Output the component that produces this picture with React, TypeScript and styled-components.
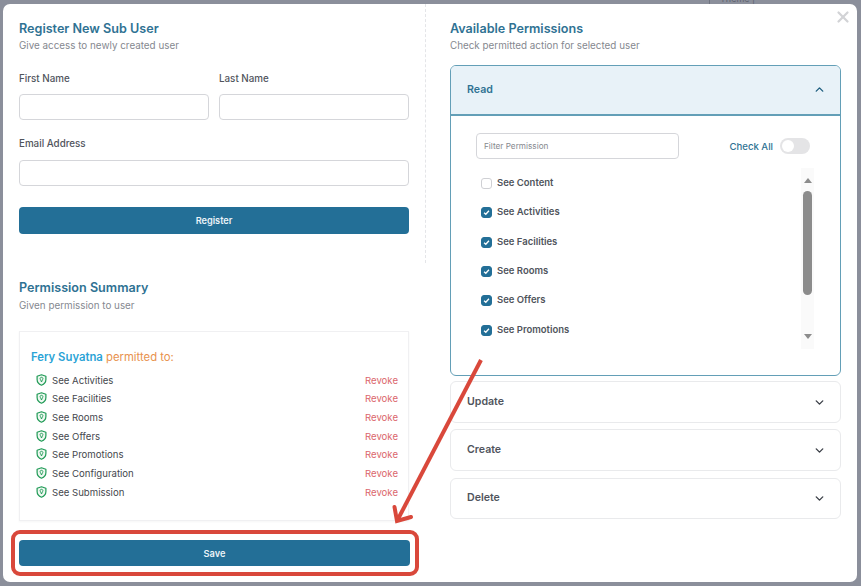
import React from 'react';
import styled, { createGlobalStyle } from 'styled-components';
import { ChevronDown, ChevronUp, X } from 'lucide-react';

const GlobalStyle = createGlobalStyle`
  html, body { margin: 0; padding: 0; }
  body { font-family: "Inter", "Noto Sans", sans-serif; background: #8b8f9b; }
  * { box-sizing: border-box; }
`;

const TEAL = '#236f97';
const HEAD = '#2f7293';

const Backdrop = styled.div`
  position: relative;
  width: 861px;
  height: 586px;
  overflow: hidden;
  padding: 4px 4px 4px 3px;
  background: #8b8f9b;
`;

// bit of the page behind the dialog, only its lower edge shows
const BehindTab = styled.div`
  position: absolute;
  top: -7px;
  left: 709px;
  width: 52px;
  height: 11px;
  border-left: 1px solid #6f7380;
  font-size: 9px;
  line-height: 11px;
  padding-left: 10px;
  color: #5f636f;
`;

const Modal = styled.div`
  position: relative;
  display: flex;
  width: 854px;
  height: 578px;
  background: #fff;
  border-radius: 7px;
`;

const CloseButton = styled.div`
  position: absolute;
  top: 4px;
  right: 5px;
  color: #d2d3d6;
  display: flex;
`;

const LeftColumn = styled.div`
  width: 423px;
`;

const RegisterSection = styled.section`
  height: 259px;
  padding: 16px 16px 0 16px;
  border-right: 1px dashed #e4e5e8;
`;

const SummarySection = styled.section`
  padding: 16px 0 0 16px;
  width: 407px;
`;

const RightColumn = styled.section`
  width: 391px;
  margin-left: 24px;
  padding-top: 16px;
`;

const Title = styled.h2`
  margin: 0;
  font-size: 12.6px;
  line-height: 18px;
  font-weight: 600;
  color: ${HEAD};
`;

const Subtitle = styled.p`
  margin: 0;
  font-size: 9.85px;
  line-height: 14px;
  color: #85888f;
`;

const SummarySubtitle = styled(Subtitle)`
  margin-top: 1px;
`;

const Label = styled.label`
  display: block;
  height: 14px;
  margin-bottom: 9px;
  font-size: 9.8px;
  line-height: 14px;
  font-weight: 500;
  color: #50545c;
`;

const FieldRow = styled.div`
  display: flex;
  gap: 10px;
  margin-top: 20px;

  ${Label} {
    margin-bottom: 8px;
  }
`;

const Field = styled.div`
  flex: 1;
`;

const EmailField = styled(Field)`
  margin-top: 17px;
`;

const TextInput = styled.input`
  display: block;
  width: 100%;
  height: 26px;
  border: 1px solid #d5d6da;
  border-radius: 4px;
  background: #fff;
  font: inherit;
  outline: none;
`;

const PrimaryButton = styled.button`
  display: block;
  width: 100%;
  height: 27px;
  border: none;
  border-radius: 4px;
  background: ${TEAL};
  color: #eaf3f8;
  font: 600 9.2px "Inter", sans-serif;
`;

const RegisterButton = styled(PrimaryButton)`
  margin-top: 21px;
`;

const SummaryCard = styled.div`
  width: 390px;
  height: 190px;
  margin-top: 19px;
  padding: 16px 10px 0 11px;
  border: 1px solid #f0f0f2;
  box-shadow: 0 1px 2px rgba(0, 0, 0, 0.04);
`;

const CardHeading = styled.div`
  height: 18px;
  margin-bottom: 5px;
  font-size: 11.3px;
  line-height: 18px;
  color: #e8924e;
`;

const UserName = styled.span`
  font-weight: 600;
  color: #2ba3d6;
`;

const SummaryRow = styled.div`
  display: flex;
  align-items: center;
  height: 18.67px;
  padding-left: 5px;
  font-size: 9.6px;
  color: #44474d;
`;

const ShieldSvg = styled.svg`
  flex: none;
  margin-right: 5px;
  margin-top: -1px;
`;

const RevokeLink = styled.span`
  margin-left: auto;
  color: #db676c;
`;

const SaveWrap = styled.div`
  position: relative;
  margin-top: 19px;
`;

const SaveButton = styled(PrimaryButton)`
  height: 26px;
`;

const Highlight = styled.div`
  position: absolute;
  inset: -10px -9px -10px -8px;
  border: 4px solid #d9483b;
  border-radius: 9px;
  pointer-events: none;
`;

const Accordion = styled.div`
  margin-top: 13px;
  display: flex;
  flex-direction: column;
  gap: 6px;
`;

const OpenPanel = styled.div`
  height: 311px;
  margin-bottom: -1px;
  border: 1px solid #639fb7;
  border-radius: 6px;
  overflow: hidden;
`;

const OpenHeader = styled.div`
  display: flex;
  align-items: center;
  justify-content: space-between;
  height: 50px;
  padding: 0 14px 2px 16px;
  background: #e8f2f8;
  border-bottom: 2px solid #639fb7;
  font-size: 10.6px;
  font-weight: 600;
  color: ${HEAD};
`;

const ClosedPanel = styled.div`
  display: flex;
  align-items: center;
  justify-content: space-between;
  height: 42px;
  padding: 0 14px 0 16px;
  border: 1px solid #e9eaec;
  border-radius: 6px;
  font-size: 10.6px;
  font-weight: 600;
  color: #50545c;

  &:last-child {
    height: 41px;
    margin-top: 1px;
  }
`;

const PanelLabel = styled.span`
  margin-top: -2px;
`;

const PanelBody = styled.div`
  padding: 17px 30px 0 25px;
`;

const Toolbar = styled.div`
  display: flex;
  align-items: center;
  justify-content: space-between;
`;

const FilterInput = styled.input`
  width: 203px;
  height: 26px;
  padding: 0 7px;
  border: 1px solid #d5d6da;
  border-radius: 4px;
  font: 8.2px "Inter", sans-serif;
  outline: none;
  &::placeholder { color: #85888e; opacity: 1; }
`;

const CheckAll = styled.div`
  display: flex;
  align-items: center;
  gap: 7px;
  font-size: 9.6px;
  font-weight: 500;
  color: ${HEAD};
`;

const Toggle = styled.div`
  width: 30px;
  height: 16px;
  padding: 2px;
  border-radius: 8px;
  background: #e4e4e6;
`;

const ToggleKnob = styled.div`
  width: 12px;
  height: 12px;
  border-radius: 50%;
  background: #fff;
`;

const ListArea = styled.div`
  display: flex;
  justify-content: space-between;
  height: 181px;
  margin-top: 9px;
  margin-right: -4px;
`;

const PermissionList = styled.div`
  padding: 0 0 0 5px;
`;

const PermissionItem = styled.div`
  display: flex;
  align-items: center;
  gap: 5px;
  height: 29.3px;
  font-size: 9.5px;
  font-weight: 600;
  color: #50545c;
`;

const Checkbox = styled.span<{ $checked?: boolean }>`
  display: flex;
  align-items: center;
  justify-content: center;
  width: 11px;
  height: 11px;
  margin-top: ${p => (p.$checked ? '2px' : '1px')};
  border-radius: 3px;
  color: #fff;
  background: ${p => (p.$checked ? TEAL : '#fff')};
  border: 1px solid ${p => (p.$checked ? TEAL : '#cfd0d4')};
`;

const ScrollTrack = styled.div`
  display: flex;
  flex-direction: column;
  align-items: center;
  width: 13px;
  padding: 10px 0 10px;
  background: #fafafa;
`;

const ArrowUp = styled.div`
  width: 0;
  height: 0;
  border-left: 4.5px solid transparent;
  border-right: 4.5px solid transparent;
  border-bottom: 5px solid #8c8c8c;
`;

const ArrowDown = styled.div`
  width: 0;
  height: 0;
  margin-top: auto;
  border-left: 4.5px solid transparent;
  border-right: 4.5px solid transparent;
  border-top: 5px solid #8c8c8c;
`;

const ScrollThumb = styled.div`
  width: 9px;
  height: 104px;
  margin-top: 8px;
  border-radius: 5px;
  background: #8c8c8c;
`;

const ArrowOverlay = styled.svg`
  position: absolute;
  left: 0;
  top: 0;
  pointer-events: none;
`;

const ShieldIcon = () => (
  <ShieldSvg width="11" height="12" viewBox="0 0 11 12">
    <path
      d="M5.5 0.8 L9.9 2.2 V5.6 C9.9 8.4 8 10.3 5.5 11.2 C3 10.3 1.1 8.4 1.1 5.6 V2.2 Z"
      fill="#eef8f1"
      stroke="#1f9a55"
      strokeWidth="1.2"
      strokeLinejoin="round"
    />
    <path
      d="M5.5 3.3 A1.4 1.4 0 0 1 6.4 5.8 L5.5 8 L4.6 5.8 A1.4 1.4 0 0 1 5.5 3.3 Z"
      fill="none"
      stroke="#1f9a55"
      strokeWidth="0.9"
    />
  </ShieldSvg>
);

const summary = [
  'See Activities',
  'See Facilities',
  'See Rooms',
  'See Offers',
  'See Promotions',
  'See Configuration',
  'See Submission',
];

const permissions = [
  { name: 'See Content', checked: false },
  { name: 'See Activities', checked: true },
  { name: 'See Facilities', checked: true },
  { name: 'See Rooms', checked: true },
  { name: 'See Offers', checked: true },
  { name: 'See Promotions', checked: true },
];

export default function App() {
  return (
    <Backdrop>
      <GlobalStyle />
      <BehindTab>Theme |</BehindTab>
      <Modal>
        <CloseButton>
          <X size={18} strokeWidth={3} />
        </CloseButton>
        <LeftColumn>
          <RegisterSection>
            <Title>Register New Sub User</Title>
            <Subtitle>Give access to newly created user</Subtitle>
            <FieldRow>
              <Field>
                <Label>First Name</Label>
                <TextInput />
              </Field>
              <Field>
                <Label>Last Name</Label>
                <TextInput />
              </Field>
            </FieldRow>
            <EmailField>
              <Label>Email Address</Label>
              <TextInput />
            </EmailField>
            <RegisterButton>Register</RegisterButton>
          </RegisterSection>
          <SummarySection>
            <Title>Permission Summary</Title>
            <SummarySubtitle>Given permission to user</SummarySubtitle>
            <SummaryCard>
              <CardHeading>
                <UserName>Fery Suyatna</UserName> permitted to:
              </CardHeading>
              {summary.map(item => (
                <SummaryRow key={item}>
                  <ShieldIcon />
                  {item}
                  <RevokeLink>Revoke</RevokeLink>
                </SummaryRow>
              ))}
            </SummaryCard>
            <SaveWrap>
              <SaveButton>Save</SaveButton>
              <Highlight />
            </SaveWrap>
          </SummarySection>
        </LeftColumn>
        <RightColumn>
          <Title>Available Permissions</Title>
          <Subtitle>Check permitted action for selected user</Subtitle>
          <Accordion>
            <OpenPanel>
              <OpenHeader>
                Read
                <ChevronUp size={13} strokeWidth={2.6} color="#1f5f80" />
              </OpenHeader>
              <PanelBody>
                <Toolbar>
                  <FilterInput placeholder="Filter Permission" />
                  <CheckAll>
                    Check All
                    <Toggle>
                      <ToggleKnob />
                    </Toggle>
                  </CheckAll>
                </Toolbar>
                <ListArea>
                  <PermissionList>
                    {permissions.map(p => (
                      <PermissionItem key={p.name}>
                        <Checkbox $checked={p.checked}>
                          {p.checked && (
                            <svg width="7" height="7" viewBox="0 0 8 8">
                              <path d="M1.2 4.2 3.2 6 6.8 2" fill="none" stroke="#fff" strokeWidth="1.5" />
                            </svg>
                          )}
                        </Checkbox>
                        {p.name}
                      </PermissionItem>
                    ))}
                  </PermissionList>
                  <ScrollTrack>
                    <ArrowUp />
                    <ScrollThumb />
                    <ArrowDown />
                  </ScrollTrack>
                </ListArea>
              </PanelBody>
            </OpenPanel>
            {['Update', 'Create', 'Delete'].map(name => (
              <ClosedPanel key={name}>
                <PanelLabel>{name}</PanelLabel>
                <ChevronDown size={13} strokeWidth={2.6} color="#3c4048" />
              </ClosedPanel>
            ))}
          </Accordion>
        </RightColumn>
      </Modal>
      <ArrowOverlay width="861" height="586" viewBox="0 0 861 586">
        <path d="M481 360 397.5 520" fill="none" stroke="#d9483b" strokeWidth="4" />
        <path d="M394.5 507 397 521 411 517" fill="none" stroke="#d9483b" strokeWidth="4" strokeLinecap="round" />
      </ArrowOverlay>
    </Backdrop>
  );
}
